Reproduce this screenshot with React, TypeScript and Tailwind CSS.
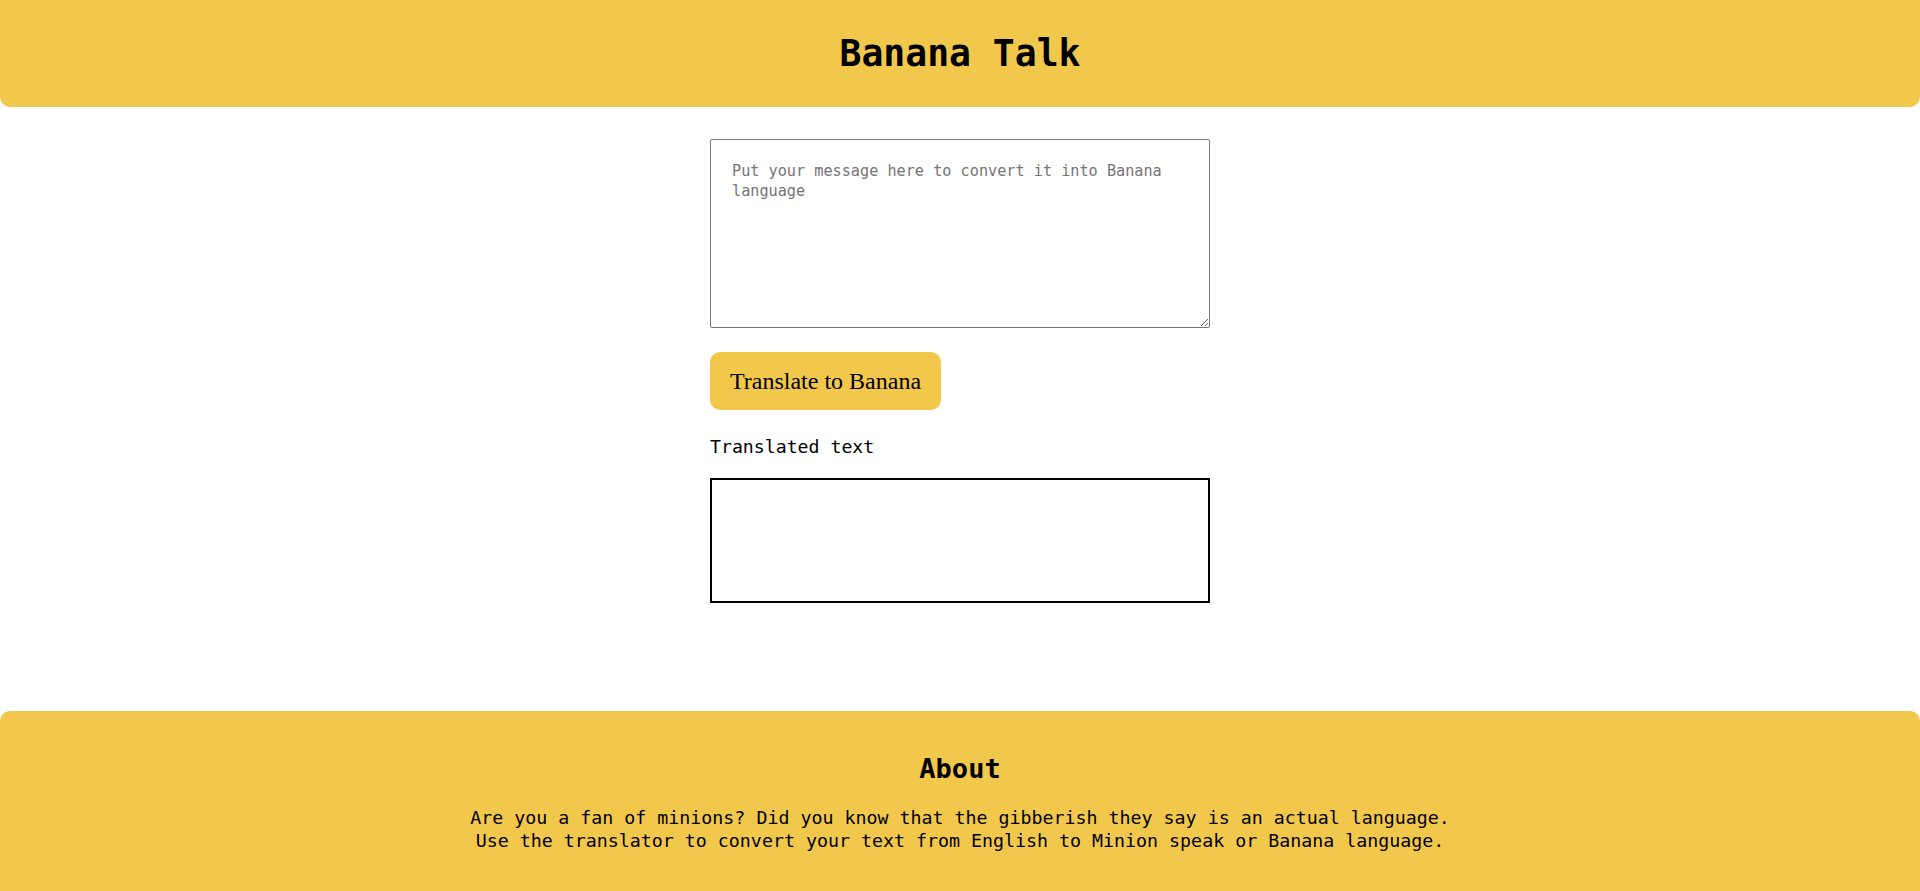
import React from "react";

export default function App() {
  const mono = "font-['DejaVu_Sans_Mono','Liberation_Mono',monospace]";
  return (
    <div className={`min-h-[891px] bg-white text-black ${mono} flex flex-col`}>
      <header className="h-[107px] bg-[#f2c84c] rounded-b-[10px] flex items-center justify-center">
        <h1 className="text-[36.4px] leading-[42px] font-bold">Banana Talk</h1>
      </header>

      <main className="w-[500px] mx-auto flex flex-col items-start">
        <textarea
          className={`mt-[32px] w-[500px] h-[189px] border border-[#767676] rounded-[2px] pl-[21px] pr-[20px] pt-[22px] pb-[20px] text-[15.2px] leading-[19.5px] ${mono} placeholder:text-[#757575] outline-none resize-y`}
          placeholder="Put your message here to convert it into Banana language"
        />
        <button className="mt-[24px] h-[58px] px-[20px] bg-[#f2c84c] rounded-[10px] text-[24px] font-['Liberation_Serif','Times_New_Roman',serif] text-black">
          Translate to Banana
        </button>
        <div className="mt-[26px] text-[18.2px] leading-[22px]">Translated text</div>
        <div className="mt-[20px] w-[500px] h-[125px] border-2 border-black"></div>
      </main>

      <footer className="mt-[108px] flex-1 bg-[#f2c84c] rounded-t-[10px] flex flex-col items-center pt-[41px] pb-[40px]">
        <h2 className="text-[27px] leading-[34px] font-bold">About</h2>
        <p className="mt-[20px] text-[18.3px] leading-[23.3px] text-center">
          Are you a fan of minions? Did you know that the gibberish they say is an actual language.
          <br />
          Use the translator to convert your text from English to Minion speak or Banana language.
        </p>
      </footer>
    </div>
  );
}
